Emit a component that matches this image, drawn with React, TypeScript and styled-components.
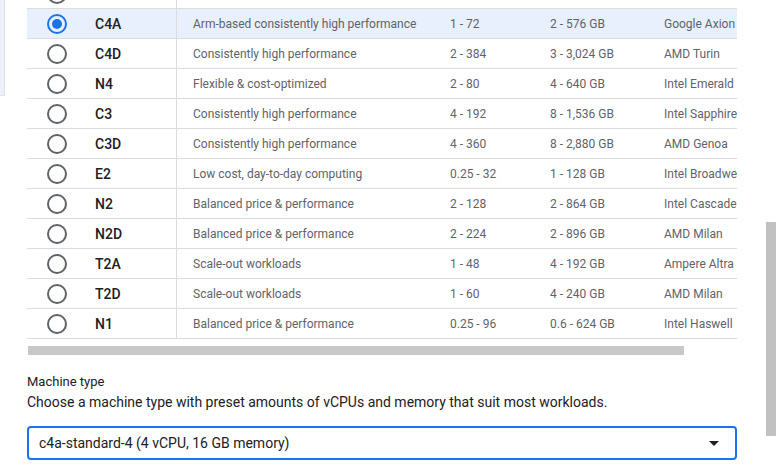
import React from "react";
import styled, { createGlobalStyle } from "styled-components";

const Global = createGlobalStyle`
  html, body { margin: 0; padding: 0; background: #fff; overflow: hidden; }
  body { font-family: Roboto, "Liberation Sans", sans-serif; width: 779px; height: 470px; }
`;

const Page = styled.div`
  position: relative;
  width: 779px;
  height: 470px;
  overflow: hidden;
  padding-left: 27px;
  box-sizing: border-box;
`;

const SideTab = styled.div`
  position: absolute;
  left: 0;
  top: 0;
  width: 4px;
  height: 95px;
  background: #eef2f8;
  border-right: 1px solid #dde3ea;
  border-bottom: 1px solid #dde3ea;
`;

const VScroll = styled.div`
  position: absolute;
  left: 766px;
  top: 222px;
  width: 10px;
  height: 214px;
  background: #c1c1c1;
`;

const TableWrap = styled.div`
  width: 710px;
  margin-top: -21px;
  overflow: hidden;
`;

const Row = styled.div<{ $sel?: boolean }>`
  display: grid;
  grid-template-columns: 150px 273px 100px 114px 140px;
  height: 29px;
  border-bottom: 1px solid #dadce0;
  background: ${(p) => (p.$sel ? "#e8f0fe" : "#fff")};
  align-items: center;
  white-space: nowrap;
`;

const NameCell = styled.div`
  display: flex;
  align-items: center;
  height: 100%;
  border-right: 1px solid #dadce0;
  font-size: 14px;
  font-weight: 500;
  color: #202124;
`;

const RadioBox = styled.div`
  width: 60px;
  display: flex;
  justify-content: center;
`;

const Radio = styled.div<{ $on?: boolean }>`
  width: 16px;
  height: 16px;
  border-radius: 50%;
  border: 2px solid ${(p) => (p.$on ? "#1a73e8" : "#5f6368")};
  display: flex;
  align-items: center;
  justify-content: center;
  &::after {
    content: "";
    display: ${(p) => (p.$on ? "block" : "none")};
    width: 10px;
    height: 10px;
    border-radius: 50%;
    background: #1a73e8;
  }
`;

const Name = styled.span`
  margin-left: 8px;
`;

const Cell = styled.div<{ $pad?: number }>`
  font-size: 12px;
  color: #5f6368;
  padding-left: ${(p) => p.$pad ?? 0}px;
  overflow: hidden;
`;

const HScroll = styled.div`
  margin-top: 7px;
  width: 656px;
  height: 9px;
  background: #c8c8c8;
  margin-left: 1px;
`;

const Title = styled.div`
  margin-top: 18px;
  font-size: 13px;
  color: #202124;
  line-height: 18px;
`;

const Desc = styled.div`
  margin-top: 1px;
  font-size: 14px;
  color: #202124;
  line-height: 20px;
`;

const Select = styled.div`
  margin-top: 14px;
  width: 710px;
  height: 34px;
  box-sizing: border-box;
  border: 2px solid #1a73e8;
  border-radius: 4px;
  display: flex;
  align-items: center;
  justify-content: space-between;
  padding: 0 16px 0 10px;
  font-size: 14px;
  color: #202124;
`;

const Caret = styled.div`
  width: 0;
  height: 0;
  border-left: 5px solid transparent;
  border-right: 5px solid transparent;
  border-top: 5px solid #202124;
`;

const rows: [string, string, string, string, string][] = [
  ["", "", "", "", ""],
  ["C4A", "Arm-based consistently high performance", "1 - 72", "2 - 576 GB", "Google Axion"],
  ["C4D", "Consistently high performance", "2 - 384", "3 - 3,024 GB", "AMD Turin"],
  ["N4", "Flexible & cost-optimized", "2 - 80", "4 - 640 GB", "Intel Emerald Rapids"],
  ["C3", "Consistently high performance", "4 - 192", "8 - 1,536 GB", "Intel Sapphire Rapids"],
  ["C3D", "Consistently high performance", "4 - 360", "8 - 2,880 GB", "AMD Genoa"],
  ["E2", "Low cost, day-to-day computing", "0.25 - 32", "1 - 128 GB", "Intel Broadwell"],
  ["N2", "Balanced price & performance", "2 - 128", "2 - 864 GB", "Intel Cascade Lake"],
  ["N2D", "Balanced price & performance", "2 - 224", "2 - 896 GB", "AMD Milan"],
  ["T2A", "Scale-out workloads", "1 - 48", "4 - 192 GB", "Ampere Altra"],
  ["T2D", "Scale-out workloads", "1 - 60", "4 - 240 GB", "AMD Milan"],
  ["N1", "Balanced price & performance", "0.25 - 96", "0.6 - 624 GB", "Intel Haswell"],
];

export default function App() {
  return (
    <Page>
      <Global />
      <SideTab />
      <VScroll />
      <TableWrap>
        {rows.map((r, i) => (
          <Row key={i} $sel={r[0] === "C4A"}>
            <NameCell>
              <RadioBox>
                <Radio $on={r[0] === "C4A"} />
              </RadioBox>
              <Name>{r[0]}</Name>
            </NameCell>
            <Cell $pad={16}>{r[1]}</Cell>
            <Cell>{r[2]}</Cell>
            <Cell>{r[3]}</Cell>
            <Cell>{r[4]}</Cell>
          </Row>
        ))}
      </TableWrap>
      <HScroll />
      <Title>Machine type</Title>
      <Desc>Choose a machine type with preset amounts of vCPUs and memory that suit most workloads.</Desc>
      <Select>
        <span>c4a-standard-4 (4 vCPU, 16 GB memory)</span>
        <Caret />
      </Select>
    </Page>
  );
}
